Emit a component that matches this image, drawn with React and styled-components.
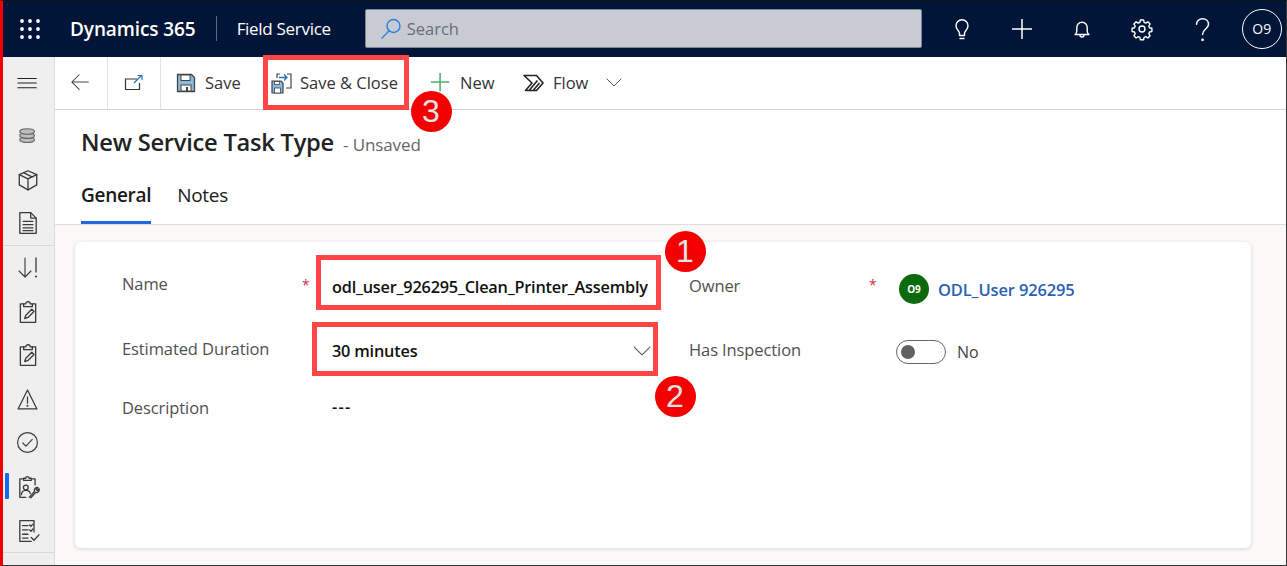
import React from "react";
import styled, { createGlobalStyle } from "styled-components";

const GlobalStyle = createGlobalStyle`
  html, body {
    margin: 0;
    padding: 0;
    background: #fff;
    overflow: hidden;
  }
  * {
    box-sizing: border-box;
  }
`;

const font = `"Open Sans", "Noto Sans", "Liberation Sans", sans-serif`;

const Icon = ({ size = 24, box = 24, color = "currentColor", width = 1.2, children }) => (
  <svg
    width={size}
    height={size}
    viewBox={`0 0 ${box} ${box}`}
    fill="none"
    stroke={color}
    strokeWidth={width}
    strokeLinecap="round"
    strokeLinejoin="round"
  >
    {children}
  </svg>
);

const ClipboardIcon = () => (
  <Icon size={24} box={22} color="#3a3a3a" width={1.2}>
    <path d="M7 3.500H4v17h14v-17h-3" />
    <path d="M7 6V3.500h2c0-2.500 4-2.500 4 0h2V6z" />
    <path d="M8 17l1-3 5.500-5.500 2 2L11 16z" />
  </Icon>
);

const App = () => {
  return (
    <Page>
      <GlobalStyle />
      <Header>
        <Waffle>
          <svg width="20" height="20" viewBox="0 0 20 20" fill="#fff">
            {[2, 10, 18].map((y) =>
              [2, 10, 18].map((x) => <circle key={`${x}-${y}`} cx={x} cy={y} r="1.9" />)
            )}
          </svg>
        </Waffle>
        <Brand>Dynamics 365</Brand>
        <BrandDivider />
        <AppName>Field Service</AppName>
        <SearchBox>
          <svg width="24" height="24" viewBox="0 0 24 24" fill="none" stroke="#2a7de1" strokeWidth="1.4">
            <circle cx="14.5" cy="9" r="6.5" />
            <path d="M10 14 L3 21" strokeLinecap="round" />
          </svg>
          <SearchText>Search</SearchText>
        </SearchBox>
        <HeaderIcons>
          <HeaderIcon>
            <Icon size={24} width={1.4}>
              <path d="M9.500 18.500v-2.200c0-1.400-1-2.200-1.900-3.500C6.700 11.600 6 10.300 6 8.800A6 6 0 0 1 18 8.800c0 1.500-.7 2.800-1.600 4-.9 1.300-1.900 2.100-1.900 3.500v2.200z" />
              <path d="M10 21.500h4" />
            </Icon>
          </HeaderIcon>
          <HeaderIcon>
            <Icon size={24} width={1.5}>
              <path d="M12 2v20M2 12h20" strokeLinecap="butt" />
            </Icon>
          </HeaderIcon>
          <HeaderIcon>
            <Icon size={24} width={1.4}>
              <path d="M5 17.500c1.300-.8 1.800-1.700 1.800-3.500v-3.500a5.200 5.200 0 0 1 10.400 0V14c0 1.800.5 2.700 1.800 3.500z" />
              <path d="M10 18c0 2.700 4 2.700 4 0" />
            </Icon>
          </HeaderIcon>
          <HeaderIcon>
            <Icon size={24} width={1.4}>
              <circle cx="12" cy="12" r="3" />
              <path d="M10.400 3h3.200l.5 2.400 1.700.7 2.100-1.300 2.200 2.200-1.300 2.100.7 1.700 2.400.5v3.200l-2.400.5-.7 1.700 1.300 2.100-2.200 2.200-2.100-1.300-1.700.7-.5 2.400h-3.200l-.5-2.400-1.700-.7-2.100 1.300-2.200-2.200 1.300-2.100-.7-1.700-2.400-.5v-3.200l2.400-.5.7-1.700-1.300-2.100 2.200-2.200 2.100 1.300 1.700-.7z" />
            </Icon>
          </HeaderIcon>
          <HeaderIcon>
            <Icon size={26} width={1.4}>
              <path d="M7 7.500C7 4.500 9.500 2.500 12.500 2.500s5.500 2 5.500 5c0 4.500-5.500 4.500-5.500 9.500" />
              <circle cx="12.500" cy="22" r=".6" fill="#fff" />
            </Icon>
          </HeaderIcon>
          <UserBadge>O9</UserBadge>
        </HeaderIcons>
      </Header>

      <Body>
        <Sidebar>
          <SideItem $height={53}>
            <Icon size={22} width={1.1} color="#222">
              <path d="M.5 6h21M.5 11h21M.5 16h21" strokeLinecap="butt" />
            </Icon>
          </SideItem>
          <SideGroup $top={5}>
            <SideItem>
              <Icon size={22} color="#666" width={1.3}>
                <ellipse cx="11" cy="15" rx="8" ry="3" fill="#bdbdbd" />
                <ellipse cx="11" cy="10.500" rx="8" ry="3" fill="#bdbdbd" />
                <ellipse cx="11" cy="6" rx="8" ry="3" fill="#bdbdbd" />
              </Icon>
            </SideItem>
            <SideItem>
              <Icon size={24} box={22} color="#3a3a3a" width={1.2}>
                <path d="M11 2.500l8 3.500v9.500l-8 4.500-8-4.500V6z" />
                <path d="M3 6l8 4 8-4M11 10v10M7 4.300l8 4" />
              </Icon>
            </SideItem>
            <SideItem>
              <Icon size={24} box={22} color="#3a3a3a" width={1.2}>
                <path d="M3.500 1.500h10l5 5v14h-15z" />
                <path d="M13.500 1.500v5h5M6.500 9.500h9M6.500 12.500h9M6.500 15.500h9M6.500 18h9" />
              </Icon>
            </SideItem>
          </SideGroup>
          <SideDivider />
          <SideGroup $top={0}>
            <SideItem $height={43.8}>
              <Icon size={24} color="#3a3a3a" width={1.1}>
                <path d="M9 2v19M3 15l6 6 6-6" />
                <path d="M20 2v14" strokeWidth="1.300" />
                <circle cx="20" cy="20.500" r=".5" fill="#3a3a3a" />
              </Icon>
            </SideItem>
            <SideItem $height={43.8}>
              <ClipboardIcon />
            </SideItem>
            <SideItem $height={43.8}>
              <ClipboardIcon />
            </SideItem>
            <SideItem $height={43.8}>
              <Icon size={23} box={22} color="#3a3a3a" width={1.2}>
                <path d="M11 2L2 20h18z" />
                <path d="M11 8.500v6" />
                <circle cx="11" cy="17" r=".4" fill="#3a3a3a" />
              </Icon>
            </SideItem>
            <SideItem $height={43.8}>
              <Icon size={23} box={22} color="#3a3a3a" width={1.1}>
                <circle cx="11" cy="11" r="9.500" />
                <path d="M6.500 11.500l3 3 6-6.500" />
              </Icon>
            </SideItem>
            <SideItem $height={43.8} $active>
              <Icon size={24} box={22} color="#3a3a3a" width={1.2}>
                <path d="M6 3.500H3.500v17H9M15 3.500h2.500V9" />
                <path d="M7 5V3h2c0-2 3-2 3 0h2v2z" />
                <circle cx="9" cy="11.500" r="2.200" />
                <path d="M5 18c0-5 8-5 8-1" />
                <path d="M12 20.500l5-5.500c-.8-2 1-4 3.200-3.500l-1.700 1.800 1 1 1.800-1.600c.3 2.200-1.500 4-3.300 3.200l-4.400 5" />
              </Icon>
            </SideItem>
            <SideItem $height={43.8}>
              <Icon size={24} box={22} color="#3a3a3a" width={1.2}>
                <path d="M14 20.500H3.500v-19h13V12" />
                <path d="M6 6h5M6 10h5M6 14h5M6 17.500h5" />
                <path d="M12.500 5.500l1.200 1.200 1.800-2M12.500 10l1.200 1.200 1.800-2M14 17l2.500 2.500 4.500-5" />
              </Icon>
            </SideItem>
          </SideGroup>
          <SideDivider />
        </Sidebar>

        <Main>
          <Toolbar>
            <ToolTab>
              <Icon size={22} color="#444" width={1.1}>
                <path d="M20 11H2M10 3l-8 8 8 8" />
              </Icon>
            </ToolTab>
            <ToolTab>
              <svg width="22" height="22" viewBox="0 0 22 22" fill="none" strokeWidth="1.200">
                <path d="M14 7H2.500v10.500h14V11" stroke="#333" />
                <path d="M11 11l7-7M14.500 3.500H19V8" stroke="#2a6ebb" />
              </svg>
            </ToolTab>
            <ToolItems>
              <ToolButton $width={95}>
                <svg width="20" height="20" viewBox="0 0 20 20">
                  <path d="M1.500 1.500h14l3 3v14h-17z" fill="#8cb8de" stroke="#444" strokeWidth="1.300" />
                  <rect x="5" y="2" width="9" height="5.500" fill="#fff" stroke="#444" />
                  <rect x="5" y="12" width="10" height="6" fill="#fff" stroke="#444" />
                  <rect x="10" y="14" width="2" height="4" fill="#444" />
                </svg>
                <ToolLabel>Save</ToolLabel>
              </ToolButton>
              <ToolButton $width={159} $gap={7}>
                <svg width="22" height="22" viewBox="0 0 22 22">
                  <path d="M1 9h9l2 2v10H1z" fill="#8cb8de" stroke="#444" strokeWidth="1.200" />
                  <rect x="3.500" y="9.500" width="5" height="3" fill="#fff" stroke="#444" strokeWidth=".8" />
                  <rect x="3.500" y="16" width="6" height="5" fill="#fff" stroke="#444" strokeWidth=".8" />
                  <path d="M6 6V2h3M16 2h4v14h-5" fill="none" stroke="#444" strokeWidth="1.200" />
                  <path d="M8 5.500h8M13 2.500l3 3-3 3" fill="none" stroke="#2a6ebb" strokeWidth="1.300" />
                </svg>
                <ToolLabel>Save &amp; Close</ToolLabel>
              </ToolButton>
              <ToolButton $width={93} $gap={8}>
                <Icon size={22} color="#4caf6a" width={1.7}>
                  <path d="M11 1v20M1 11h20" strokeLinecap="butt" />
                </Icon>
                <ToolLabel>New</ToolLabel>
              </ToolButton>
              <ToolButton $width={84}>
                <svg width="21" height="18" viewBox="0 0 21 18" fill="none" stroke="#222" strokeWidth="1.600" strokeLinejoin="round">
                  <path d="M1 1.500h12.500l6.500 7.500-6.500 7.500H2.500L9 9z" />
                  <path d="M6.500 16l8-9.500M10.500 16l6-7" />
                </svg>
                <ToolLabel>Flow</ToolLabel>
              </ToolButton>
              <FlowChevron>
                <Icon size={16} box={16} color="#555" width={1}>
                  <path d="M1 4l7 7 7-7" />
                </Icon>
              </FlowChevron>
            </ToolItems>
          </Toolbar>

          <FormHeader>
            <TitleRow>
              <Title>New Service Task Type</Title>
              <Unsaved>- Unsaved</Unsaved>
            </TitleRow>
            <Tabs>
              <Tab $active>General</Tab>
              <Tab>Notes</Tab>
            </Tabs>
          </FormHeader>

          <Content>
            <Card>
              <Column>
                <Field $height={64} $offset={-4}>
                  <Label>Name</Label>
                  <Star>*</Star>
                  <Value>odl_user_926295_Clean_Printer_Assembly</Value>
                </Field>
                <Field $height={64} $offset={-3}>
                  <Label>Estimated Duration</Label>
                  <Star />
                  <Value>30 minutes</Value>
                  <Chevron>
                    <Icon size={18} box={16} color="#555" width={0.9}>
                      <path d="M1 4.500l7 7 7-7" />
                    </Icon>
                  </Chevron>
                </Field>
                <Field $height={48} $offset={0}>
                  <Label>Description</Label>
                  <Star />
                  <Value $wide>---</Value>
                </Field>
              </Column>
              <Column $right>
                <Field $height={64} $offset={-2}>
                  <Label>Owner</Label>
                  <Star>*</Star>
                  <OwnerValue>
                    <Avatar>O9</Avatar>
                    <OwnerLink>ODL_User 926295</OwnerLink>
                  </OwnerValue>
                </Field>
                <Field $height={64} $offset={-2}>
                  <Label>Has Inspection</Label>
                  <Star />
                  <ToggleValue>
                    <Toggle />
                    <ToggleText>No</ToggleText>
                  </ToggleValue>
                </Field>
              </Column>
            </Card>
          </Content>
        </Main>
      </Body>

      <Callout $x={316} $y={255} $w={345} $h={55} />
      <Callout $x={312} $y={322} $w={346} $h={54} />
      <Callout $x={263} $y={55} $w={146} $h={55} />
      <Badge $x={685} $y={251}>1</Badge>
      <Badge $x={675} $y={396}>2</Badge>
      <Badge $x={431} $y={111}>3</Badge>
    </Page>
  );
};

const Page = styled.div`
  position: relative;
  width: 1287px;
  height: 566px;
  display: flex;
  flex-direction: column;
  overflow: hidden;
  border-left: 3px solid #f00000;
  border-top: 1px solid #111;
  border-right: 1px solid #333;
  border-bottom: 1px solid #333;
  font-family: ${font};
  color: #333;
`;

const Header = styled.header`
  height: 56px;
  flex: none;
  padding-bottom: 1px;
  display: flex;
  align-items: center;
  background: #001537;
  color: #fff;
`;

const Waffle = styled.div`
  width: 54px;
  padding-left: 17px;
  display: flex;
  align-items: center;
`;

const Brand = styled.div`
  margin-left: 13px;
  font-size: 19px;
  font-weight: 600;
  letter-spacing: -0.1px;
`;

const BrandDivider = styled.div`
  width: 1px;
  height: 25px;
  margin: 0 20px;
  background: #5b6b82;
`;

const AppName = styled.div`
  font-size: 17px;
  letter-spacing: -0.3px;
`;

const SearchBox = styled.div`
  width: 557px;
  height: 39px;
  margin-left: 34px;
  padding-left: 13px;
  display: flex;
  align-items: center;
  gap: 4px;
  background: #c8ccd2;
  border: 1px solid #7b8594;
  border-radius: 2px;
`;

const SearchText = styled.span`
  font-size: 16.500px;
  color: #666d76;
`;

const HeaderIcons = styled.div`
  margin-left: 10px;
  display: flex;
  align-items: center;
`;

const HeaderIcon = styled.div`
  width: 60px;
  display: flex;
  justify-content: center;
  align-items: center;
`;

const UserBadge = styled.div`
  width: 40px;
  height: 40px;
  margin-left: 10px;
  border: 1px solid #fff;
  border-radius: 50%;
  display: flex;
  align-items: center;
  justify-content: center;
  font-size: 14px;
  font-weight: 500;
`;

const Body = styled.div`
  flex: 1;
  min-height: 0;
  display: flex;
`;

const Sidebar = styled.nav`
  width: 52px;
  flex: none;
  padding-right: 2px;
  background: #efefef;
  border-right: 1px solid #dcdcdc;
`;

const SideGroup = styled.div`
  display: flex;
  flex-direction: column;
  padding-top: ${(p) => p.$top}px;
`;

const SideItem = styled.div`
  position: relative;
  height: ${(p) => p.$height || 43.3}px;
  display: flex;
  align-items: center;
  justify-content: center;
  &::before {
    content: "";
    display: ${(p) => (p.$active ? "block" : "none")};
    position: absolute;
    left: 2px;
    top: 8px;
    width: 4px;
    height: 26px;
    background: #0f6cf0;
    border-radius: 1px;
  }
`;

const SideDivider = styled.div`
  height: 1px;
  margin-right: -2px;
  background: #d9d9d9;
`;

const Main = styled.main`
  flex: 1;
  min-width: 0;
  display: flex;
  flex-direction: column;
`;

const Toolbar = styled.div`
  height: 53px;
  flex: none;
  display: flex;
  background: #fff;
`;

const ToolTab = styled.div`
  width: 53px;
  display: flex;
  align-items: center;
  justify-content: center;
  border-right: 1px solid #e2e2e2;
  border-bottom: 1px solid #d4d4d4;
`;

const ToolItems = styled.div`
  flex: 1;
  display: flex;
  align-items: center;
  padding-left: 15px;
  border-bottom: 1px solid #d4d4d4;
`;

const ToolButton = styled.div`
  width: ${(p) => p.$width}px;
  display: flex;
  align-items: center;
  gap: ${(p) => p.$gap || 9}px;
`;

const ToolLabel = styled.span`
  margin-top: -2px;
  font-size: 16.500px;
  color: #333;
`;

const FlowChevron = styled.div`
  margin-left: -1px;
  display: flex;
`;

const FormHeader = styled.div`
  height: 115px;
  flex: none;
  padding-left: 26px;
  display: flex;
  flex-direction: column;
  background: #fff;
  border-bottom: 1px solid #dedede;
`;

const TitleRow = styled.div`
  margin-top: 16px;
  display: flex;
  align-items: baseline;
  gap: 9px;
`;

const Title = styled.h1`
  margin: 0;
  font-size: 23.700px;
  font-weight: 600;
  letter-spacing: -0.25px;
  color: #222;
`;

const Unsaved = styled.span`
  font-size: 17px;
  letter-spacing: -0.1px;
  color: #666;
`;

const Tabs = styled.div`
  margin-top: auto;
  display: flex;
  gap: 26px;
`;

const Tab = styled.div`
  height: 42px;
  font-size: 19px;
  font-weight: ${(p) => (p.$active ? 600 : 400)};
  letter-spacing: -0.3px;
  color: #1a1a1a;
  border-bottom: 3px solid ${(p) => (p.$active ? "#2266e3" : "transparent")};
`;

const Content = styled.div`
  flex: 1;
  min-height: 0;
  padding: 17px 35px 17px 20px;
  background: #faf9f8;
`;

const Card = styled.section`
  height: 306px;
  padding: 13px 0 0 47px;
  display: flex;
  background: #fff;
  border-radius: 6px;
  box-shadow: 0 1px 4px rgba(0, 0, 0, 0.14);
`;

const Column = styled.div`
  width: ${(p) => (p.$right ? "auto" : "567px")};
  flex: ${(p) => (p.$right ? 1 : "none")};
  display: flex;
  flex-direction: column;
`;

const Field = styled.div`
  position: relative;
  height: ${(p) => p.$height}px;
  display: grid;
  grid-template-columns: 180px 30px 1fr;
  align-items: center;
  & > span:first-child {
    position: relative;
    top: ${(p) => p.$offset}px;
  }
`;

const Label = styled.span`
  font-size: 16.500px;
  letter-spacing: -0.1px;
  color: #505050;
`;

const Star = styled.span`
  font-size: 14px;
  color: #d13438;
  margin-top: -5px;
`;

const Value = styled.span`
  font-size: 16.300px;
  font-weight: 600;
  letter-spacing: ${(p) => (p.$wide ? "1.2px" : "-0.2px")};
  color: #111;
  white-space: nowrap;
`;

const Chevron = styled.div`
  position: absolute;
  left: 511px;
  top: 23px;
  display: flex;
`;

const OwnerValue = styled.div`
  margin-top: 4px;
  display: flex;
  align-items: center;
  gap: 9px;
`;

const Avatar = styled.div`
  width: 30px;
  height: 30px;
  border-radius: 50%;
  background: #0b6a0b;
  color: #fff;
  display: flex;
  align-items: center;
  justify-content: center;
  font-size: 10px;
  font-weight: 700;
`;

const OwnerLink = styled.span`
  font-size: 16.500px;
  font-weight: 600;
  letter-spacing: -0.15px;
  color: #2b5fb4;
`;

const ToggleValue = styled.div`
  margin-top: 2px;
  margin-left: -3px;
  display: flex;
  align-items: center;
  gap: 11px;
`;

const Toggle = styled.div`
  position: relative;
  width: 50px;
  height: 24px;
  border: 1px solid #666;
  border-radius: 12px;
  &::after {
    content: "";
    position: absolute;
    left: 4px;
    top: 4px;
    width: 14px;
    height: 14px;
    border-radius: 50%;
    background: #616161;
  }
`;

const ToggleText = styled.span`
  font-size: 16px;
  color: #444;
`;

const Callout = styled.div`
  position: absolute;
  left: ${(p) => p.$x - 3}px;
  top: ${(p) => p.$y - 1}px;
  width: ${(p) => p.$w}px;
  height: ${(p) => p.$h}px;
  border: 5px solid #ff4646;
`;

const Badge = styled.div`
  position: absolute;
  left: ${(p) => p.$x - 23.5}px;
  top: ${(p) => p.$y - 21.5}px;
  width: 41px;
  height: 41px;
  border-radius: 50%;
  background: #f40000;
  color: #e4e4e4;
  display: flex;
  align-items: center;
  justify-content: center;
  font-family: "Liberation Sans", Arial, sans-serif;
  font-size: 32px;
`;

export default App;
